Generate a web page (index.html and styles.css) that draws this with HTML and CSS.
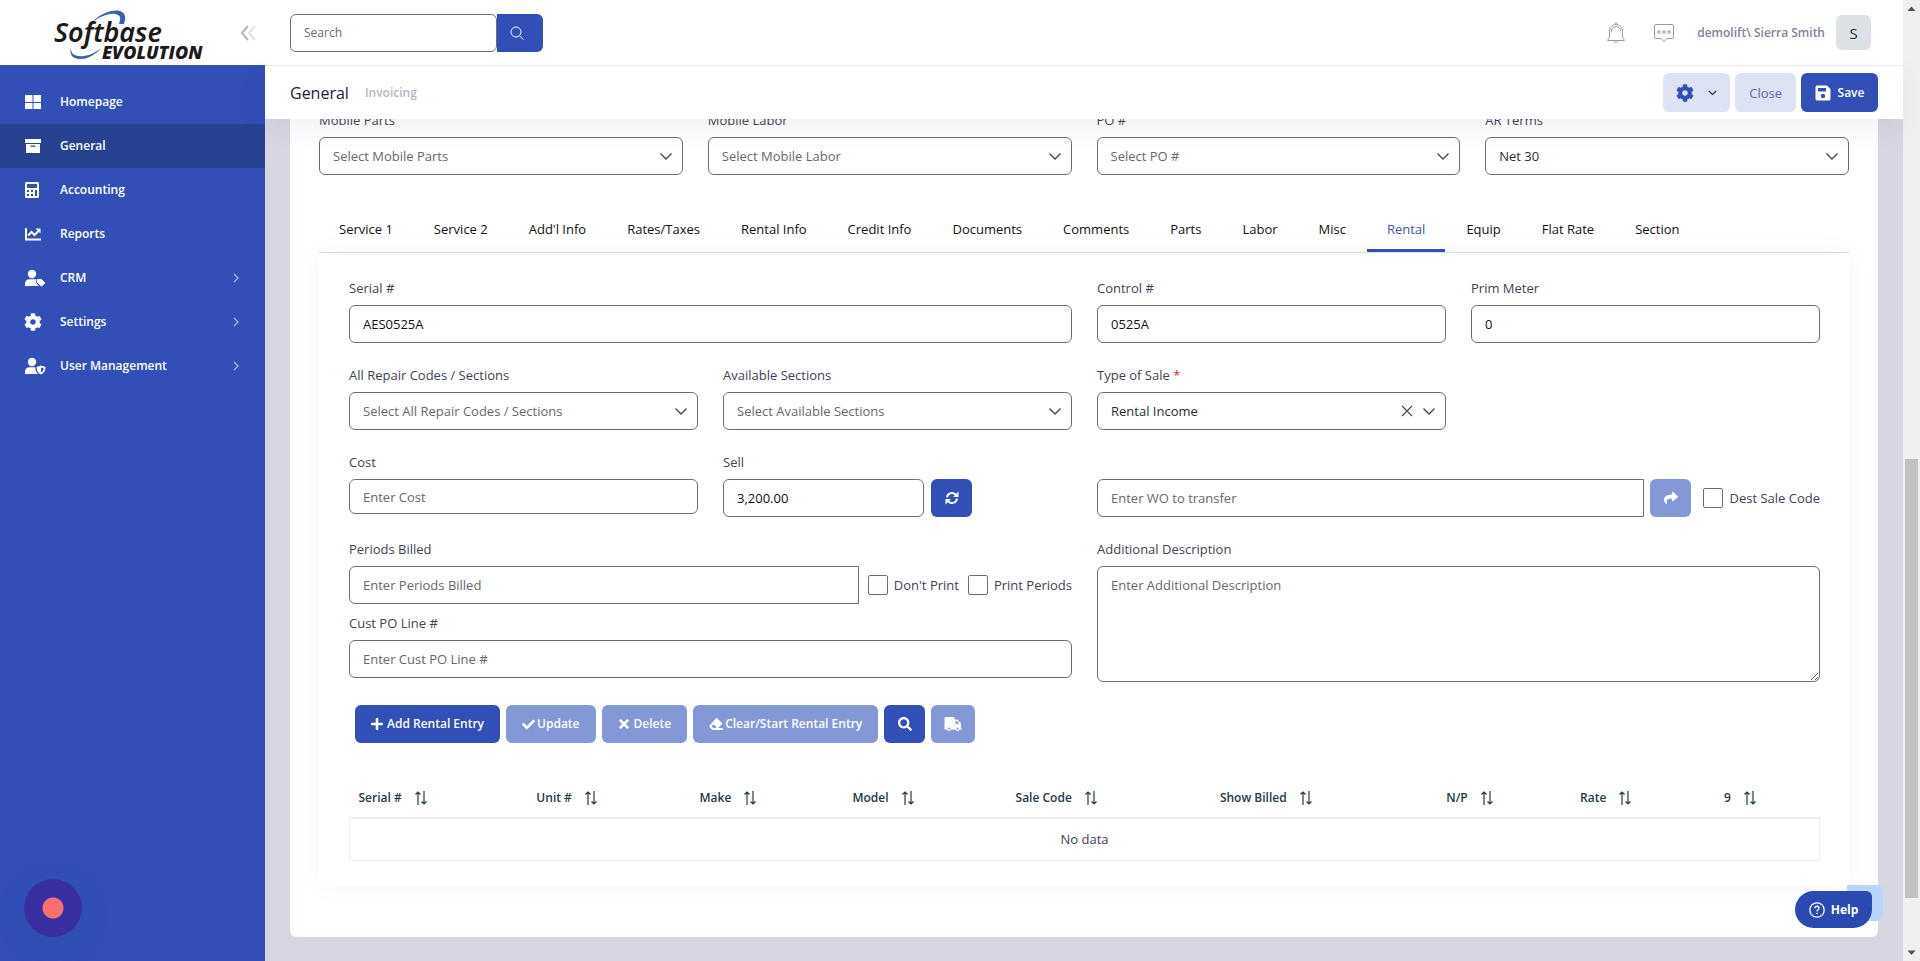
FILE: index.html
```html
<!DOCTYPE html>
<html lang="en">
<head>
<meta charset="utf-8">
<meta name="viewport" content="width=device-width, initial-scale=1">
<title>General - Invoicing</title>
<link rel="stylesheet" href="styles.css">
</head>
<body>
<svg class="sprite" aria-hidden="true">
  <symbol id="i-chev" viewBox="0 0 14 10"><path d="M1.500 2.500 7 8l5.500-5.500" fill="none" stroke="currentColor" stroke-width="1.300"/></symbol>
  <symbol id="i-right" viewBox="0 0 6 10"><path d="M1 1l4 4-4 4" fill="none" stroke="currentColor" stroke-width="1.300"/></symbol>
  <symbol id="i-cog" viewBox="0 0 512 512"><path fill="currentColor" d="M487.400 315.700l-42.600-24.600c4.300-23.200 4.300-47 0-70.200l42.600-24.600c4.900-2.800 7.100-8.600 5.500-14-11.100-35.600-30-67.800-54.700-94.600-3.800-4.100-10-5.100-14.800-2.300L380.800 110c-17.900-15.400-38.500-27.300-60.800-35.100V25.800c0-5.600-3.900-10.500-9.400-11.700-36.700-8.200-74.300-7.800-109.200 0-5.500 1.200-9.400 6.100-9.400 11.700V75c-22.200 7.900-42.800 19.800-60.800 35.100L88.700 85.500c-4.900-2.800-11-1.900-14.800 2.300-24.700 26.700-43.600 58.900-54.700 94.600-1.700 5.400.6 11.200 5.500 14L67.300 221c-4.300 23.200-4.300 47 0 70.200l-42.600 24.600c-4.900 2.800-7.100 8.600-5.500 14 11.100 35.600 30 67.800 54.700 94.600 3.800 4.100 10 5.100 14.800 2.300l42.600-24.600c17.900 15.400 38.500 27.300 60.800 35.100v49.200c0 5.600 3.900 10.500 9.400 11.700 36.700 8.200 74.300 7.800 109.200 0 5.500-1.200 9.400-6.100 9.400-11.700v-49.200c22.200-7.900 42.800-19.800 60.800-35.100l42.600 24.600c4.900 2.800 11 1.900 14.800-2.300 24.700-26.700 43.600-58.900 54.700-94.600 1.500-5.500-.7-11.300-5.600-14.100zM256 336c-44.100 0-80-35.900-80-80s35.900-80 80-80 80 35.900 80 80-35.900 80-80 80z"/></symbol>
  <symbol id="i-sort" viewBox="0 0 14 14"><path d="M4 14V1M1.500 3.500 4 1l2.500 2.500M10 0v13M7.500 10.500 10 13l2.500-2.500" fill="none" stroke="currentColor" stroke-width="1.200"/></symbol>
</svg>

<div class="app">
  <aside class="sidebar">
    <div class="brand">
      <a href="#" aria-label="Softbase Evolution">
        <svg class="logo" viewBox="0 0 150 56">
          <path d="M38 17C46 9 58 4 66 6c6 2 6 7 4 13h-5c2-6 2-9-4-10-7-1-15 3-23 8z" fill="#3f5fb5"/>
          <path d="M17 42c-1 8 6 10 13 9 7-1 12-4 17-8-5 6-12 11-21 11-8 0-11-5-9-12z" fill="#3f5fb5"/>
          <text x="0" y="37" font-family="Noto Sans, sans-serif" font-size="27" font-style="italic" font-weight="600" fill="#1c1a1b">Softbase</text>
          <text x="48" y="54" font-family="Open Sans, sans-serif" font-size="18" font-style="italic" font-weight="800" fill="#1c1a1b">EVOLUTION</text>
        </svg>
      </a>
      <button class="collapse" type="button" aria-label="Collapse menu">
        <svg width="16" height="16" viewBox="0 0 16 16" fill="none" stroke-width="2"><path d="M8 1 2 8l6 7" stroke="#b3b5c6"/><path d="M15 1 9 8l6 7" stroke="#e0e0ea"/></svg>
      </button>
    </div>
    <nav class="menu" aria-label="Main">
      <a href="#"><svg width="18" height="18" viewBox="0 0 18 18"><path fill="currentColor" d="M1 2h7.500v7H1zM9.500 2H17v7H9.500zM1 10h7.500v6H1zM9.500 10H17v6H9.500z"/></svg><span>Homepage</span></a>
      <a href="#" class="active"><svg width="18" height="18" viewBox="0 0 18 18"><path fill="currentColor" fill-rule="evenodd" d="M1 2h16v4H1zM2 7h14v9H2zM6.500 8.500v1.200h5V8.500z"/></svg><span>General</span></a>
      <a href="#"><svg width="18" height="18" viewBox="0 0 18 18"><path fill="currentColor" fill-rule="evenodd" d="M2.500 1h11A1.500 1.500 0 0 1 15 2.500v13a1.500 1.500 0 0 1-1.500 1.500h-11A1.500 1.500 0 0 1 1 15.500v-13A1.500 1.500 0 0 1 2.500 1zM3 3v4h10V3zM3 9v2h2V9zM7 9v2h2V9zM11 9v6h2V9zM3 13v2h2v-2zM7 13v2h2v-2z"/></svg><span>Accounting</span></a>
      <a href="#"><svg width="18" height="18" viewBox="0 0 18 18"><path fill="currentColor" d="M1 3h2v10.500h14v2H1z"/><path d="M4 10.500l3.500-3.500 3 3 4-4" fill="none" stroke="currentColor" stroke-width="2"/><path fill="currentColor" d="M11.500 3.500H16.500V8.500z"/></svg><span>Reports</span></a>
      <a href="#"><svg width="22" height="18" viewBox="0 0 22 18"><circle cx="8" cy="5" r="4.200" fill="currentColor"/><path fill="currentColor" d="M1 17v-2.500C1 12 3 10.300 5.500 10.300h5.500l1.500.2-.3 3.500 2.600 3z"/><path fill="currentColor" d="M13.500 10.500h4l3.500 3.500-3.500 3-4-3.500z" stroke="currentColor" stroke-linejoin="round"/></svg><span>CRM</span><svg class="more" width="6" height="10"><use href="#i-right"/></svg></a>
      <a href="#"><svg width="18" height="18"><use href="#i-cog"/></svg><span>Settings</span><svg class="more" width="6" height="10"><use href="#i-right"/></svg></a>
      <a href="#"><svg width="22" height="18" viewBox="0 0 22 18"><circle cx="8" cy="5" r="4.200" fill="currentColor"/><path fill="currentColor" fill-rule="evenodd" d="M1 17v-2.500C1 12 3 10.300 5.500 10.300h5.700c0 3 .8 5 2.800 6.700zM17 8.500l4.500 1.500c0 3.500-1.200 6-4.500 7.500-3.300-1.500-4.500-4-4.500-7.500zM17 10.500v5c1.800-.8 2.500-2.300 2.600-4.200z"/></svg><span>User Management</span><svg class="more" width="6" height="10"><use href="#i-right"/></svg></a>
    </nav>
    <button class="recorder" type="button" aria-label="Record"></button>
  </aside>

  <div class="main">
    <header class="topbar">
      <form class="search" role="search">
        <input type="text" placeholder="Search" aria-label="Search">
        <button type="button" aria-label="Search"><svg width="14" height="14" viewBox="0 0 14 14" fill="none" stroke="currentColor" stroke-width="1"><circle cx="6" cy="6" r="5"/><path d="M9.500 9.800 13.500 13.500"/></svg></button>
      </form>
      <div class="account">
        <button class="plain" type="button" aria-label="Notifications"><svg width="20" height="22" viewBox="0 0 20 22" fill="none" stroke="#9a9aa3"><path d="M1.500 18.500C4 15.500 3.500 13 3.500 9.500c0-4 2.500-7 6.500-7s6.500 3 6.500 7c0 3.500-.5 6 2 9zM5.500 10V9c0-2.500 1.500-4.500 4.500-4.500S14.500 6.500 14.500 9M8.500 2.500c0-2 3-2 3 0M8 19c.5 2 3.500 2 4 0"/></svg></button>
        <button class="plain" type="button" aria-label="Messages"><svg width="22" height="20" viewBox="0 0 22 20" fill="none" stroke="#9a9aa3"><path d="M3 1.500h16a1.500 1.500 0 0 1 1.500 1.500v11a1.500 1.500 0 0 1-1.500 1.500h-5l-3 3-3-3H3A1.500 1.500 0 0 1 1.500 14V3A1.500 1.500 0 0 1 3 1.500z"/><circle cx="6" cy="9" r="1.300"/><circle cx="11" cy="9" r="1.300"/><circle cx="16" cy="9" r="1.300"/></svg></button>
        <span class="user">demolift\ Sierra Smith</span>
        <button class="avatar" type="button" aria-label="Account menu">S</button>
      </div>
    </header>
    <div class="toolbar">
      <div class="titles"><h1>General</h1><span class="crumb">Invoicing</span></div>
      <div class="actions">
        <button class="btn light gear" type="button" aria-label="Options"><svg width="18" height="18"><use href="#i-cog"/></svg><svg class="dark" width="9" height="8" viewBox="0 0 9 8"><path d="M.8 2l3.700 3.500L8.200 2" fill="none" stroke="currentColor" stroke-width="1.200"/></svg></button>
        <button class="btn light" type="button">Close</button>
        <button class="btn save" type="button"><svg width="16" height="16" viewBox="0 0 16 16"><path fill="currentColor" fill-rule="evenodd" d="M1.500.5H12L15.500 4v10a1.500 1.500 0 0 1-1.500 1.500H2A1.500 1.500 0 0 1 .5 14V2zM3 3v3.500h8V3zM8 8.800a2.200 2.200 0 1 0 0 4.400 2.200 2.200 0 0 0 0-4.400z"/></svg>Save</button>
      </div>
    </div>

    <main class="content">
      <form class="card">
        <div class="grid4 terms">
          <div class="field"><label for="mparts">Mobile Parts</label><div class="pick"><select id="mparts" class="empty"><option>Select Mobile Parts</option></select><svg width="14" height="10"><use href="#i-chev"/></svg></div></div>
          <div class="field"><label for="mlabor">Mobile Labor</label><div class="pick"><select id="mlabor" class="empty"><option>Select Mobile Labor</option></select><svg width="14" height="10"><use href="#i-chev"/></svg></div></div>
          <div class="field"><label for="po">PO #</label><div class="pick"><select id="po" class="empty"><option>Select PO #</option></select><svg width="14" height="10"><use href="#i-chev"/></svg></div></div>
          <div class="field"><label for="ar">AR Terms</label><div class="pick"><select id="ar"><option>Net 30</option></select><svg width="14" height="10"><use href="#i-chev"/></svg></div></div>
        </div>

        <div class="tabs" role="tablist">
          <button type="button" role="tab">Service 1</button>
          <button type="button" role="tab">Service 2</button>
          <button type="button" role="tab">Add'l Info</button>
          <button type="button" role="tab">Rates/Taxes</button>
          <button type="button" role="tab">Rental Info</button>
          <button type="button" role="tab">Credit Info</button>
          <button type="button" role="tab">Documents</button>
          <button type="button" role="tab">Comments</button>
          <button type="button" role="tab">Parts</button>
          <button type="button" role="tab">Labor</button>
          <button type="button" role="tab">Misc</button>
          <button type="button" role="tab" aria-selected="true">Rental</button>
          <button type="button" role="tab">Equip</button>
          <button type="button" role="tab">Flat Rate</button>
          <button type="button" role="tab">Section</button>
        </div>

        <section class="panel" aria-label="Rental">
          <div class="grid4">
            <div class="field span2"><label for="serial">Serial #</label><input type="text" id="serial" value="AES0525A"></div>
            <div class="field"><label for="control">Control #</label><input type="text" id="control" value="0525A"></div>
            <div class="field"><label for="meter">Prim Meter</label><input type="text" id="meter" value="0"></div>

            <div class="field"><label for="codes">All Repair Codes / Sections</label><div class="pick"><select id="codes" class="empty"><option>Select All Repair Codes / Sections</option></select><svg width="14" height="10"><use href="#i-chev"/></svg></div></div>
            <div class="field"><label for="avail">Available Sections</label><div class="pick"><select id="avail" class="empty"><option>Select Available Sections</option></select><svg width="14" height="10"><use href="#i-chev"/></svg></div></div>
            <div class="field"><label for="sale">Type of Sale <span class="req">*</span></label><div class="pick clearable"><select id="sale"><option>Rental Income</option></select><button type="button" class="clear" aria-label="Clear"><svg width="12" height="12" viewBox="0 0 12 12"><path d="M1 1l10 10M11 1 1 11" stroke="currentColor" stroke-width="1.100"/></svg></button><svg width="14" height="10"><use href="#i-chev"/></svg></div></div>
            <div class="void"></div>

            <div class="field"><label for="cost">Cost</label><input type="text" id="cost" class="short" placeholder="Enter Cost"></div>
            <div class="field"><label for="sell">Sell</label><div class="line sell"><input type="text" id="sell" value="3,200.00"><button class="btn icon" type="button" aria-label="Recalculate"><svg width="14" height="14" viewBox="0 0 14 14"><path d="M2 6.300A5 5 0 0 1 11 4M12 7.700A5 5 0 0 1 3 10" fill="none" stroke="currentColor" stroke-width="2"/><path fill="currentColor" d="M13.500.5v5.500H8zM.5 13.500V8H6z"/></svg></button></div></div>
            <div class="line transfer span2"><input type="text" class="flat" placeholder="Enter WO to transfer" aria-label="WO to transfer"><button class="btn icon off" type="button" aria-label="Transfer" disabled><svg width="14" height="14" viewBox="0 0 512 512"><path fill="currentColor" d="M503.700 189.800L327.700 37.900C312.300 24.500 288 35.300 288 56v80C127.400 137.900 0 170.100 0 322.300c0 61.400 39.600 122.300 83.300 154.100 13.700 9.900 33.100-2.500 28.100-18.600C66.100 312.800 132.900 274.300 288 272v88c0 20.700 24.300 31.500 39.700 18.200l176-152c11.100-9.600 11.100-26.800 0-36.400z"/></svg></button><label class="tick wide"><input type="checkbox"><span>Dest Sale Code</span></label></div>

            <div class="stack span2">
              <div class="field"><label for="periods">Periods Billed</label><div class="line checks"><input type="text" id="periods" class="flat" placeholder="Enter Periods Billed"><label class="tick"><input type="checkbox"><span>Don't Print</span></label><label class="tick"><input type="checkbox"><span>Print Periods</span></label></div></div>
              <div class="field"><label for="cust">Cust PO Line #</label><input type="text" id="cust" placeholder="Enter Cust PO Line #"></div>
            </div>
            <div class="field span2"><label for="desc">Additional Description</label><textarea id="desc" placeholder="Enter Additional Description"></textarea></div>
          </div>

          <div class="buttons">
            <button class="btn" type="button"><svg width="12" height="14" viewBox="0 0 448 512"><path fill="currentColor" d="M416 208H272V64c0-17.700-14.300-32-32-32h-32c-17.700 0-32 14.300-32 32v144H32c-17.700 0-32 14.300-32 32v32c0 17.700 14.300 32 32 32h144v144c0 17.700 14.300 32 32 32h32c17.700 0 32-14.300 32-32V304h144c17.700 0 32-14.300 32-32v-32c0-17.700-14.300-32-32-32z"/></svg>Add Rental Entry</button>
            <button class="btn off tight" type="button" disabled><svg width="13" height="13" viewBox="0 0 512 512"><path fill="currentColor" d="M173.900 439.400l-166.400-166.400c-10-10-10-26.200 0-36.200l36.200-36.200c10-10 26.200-10 36.200 0L192 312.700 432.100 72.600c10-10 26.200-10 36.200 0l36.200 36.200c10 10 10 26.200 0 36.200l-294.400 294.400c-10 10-26.200 10-36.200 0z"/></svg>Update</button>
            <button class="btn off" type="button" disabled><svg width="12" height="14" viewBox="0 0 352 512"><path fill="currentColor" d="M242.700 256l100.100-100.100c12.300-12.300 12.300-32.200 0-44.500l-22.200-22.200c-12.300-12.300-32.200-12.300-44.500 0L176 189.300 75.900 89.200c-12.300-12.300-32.200-12.300-44.500 0L9.200 111.500c-12.300 12.300-12.300 32.200 0 44.500L109.300 256 9.200 356.100c-12.300 12.300-12.300 32.200 0 44.500l22.200 22.200c12.300 12.300 32.200 12.300 44.500 0L176 322.700l100.100 100.100c12.300 12.300 32.200 12.300 44.500 0l22.200-22.200c12.300-12.300 12.300-32.200 0-44.500L242.700 256z"/></svg>Delete</button>
            <button class="btn off tight" type="button" disabled><svg width="14" height="14" viewBox="0 0 14 14"><path fill="currentColor" fill-rule="evenodd" d="M6.800 1.500a1 1 0 0 1 1.500 0l4.400 4.300a1 1 0 0 1 0 1.500L9.200 11H14v2H3.600L.6 10a1 1 0 0 1 0-1.400zM4.300 7.500 2.500 9.300 4.300 11h2.200l1.300-1z"/></svg>Clear/Start Rental Entry</button>
            <button class="btn icon" type="button" aria-label="Search rental"><svg width="14" height="14" viewBox="0 0 512 512"><path fill="currentColor" d="M505 442.700L405.300 343c-4.500-4.500-10.600-7-17-7H372c27.600-35.300 44-79.700 44-128C416 93.100 322.900 0 208 0S0 93.100 0 208s93.100 208 208 208c48.300 0 92.700-16.400 128-44v16.300c0 6.400 2.500 12.500 7 17l99.700 99.700c9.400 9.400 24.600 9.400 33.900 0l28.300-28.300c9.400-9.400 9.400-24.600.1-34zM208 336c-70.700 0-128-57.200-128-128 0-70.700 57.200-128 128-128 70.700 0 128 57.200 128 128 0 70.700-57.200 128-128 128z"/></svg></button>
            <button class="btn icon truck off" type="button" aria-label="Deliver" disabled><svg width="18" height="14" viewBox="0 0 18 14"><path fill="currentColor" fill-rule="evenodd" d="M1.500 0h8a1 1 0 0 1 1 1v1.500h2.800L17 6.200V11h.6v1.500H.5V1a1 1 0 0 1 1-1zM11.500 4v2.800h4L12.800 4z"/><circle cx="5" cy="11.500" r="2.400" fill="currentColor"/><circle cx="13.500" cy="11.500" r="2.400" fill="currentColor"/><circle cx="5" cy="11.700" r="1.100" fill="#8497d6"/><circle cx="13.500" cy="11.700" r="1.100" fill="#8497d6"/></svg></button>
          </div>

          <table class="list">
            <colgroup><col class="w12"><col class="w11"><col class="w10"><col class="w11"><col class="w14"><col class="w15"><col class="w9"><col class="w98"><col></colgroup>
            <thead><tr>
              <th scope="col">Serial #<svg width="14" height="14"><use href="#i-sort"/></svg></th>
              <th scope="col">Unit #<svg width="14" height="14"><use href="#i-sort"/></svg></th>
              <th scope="col">Make<svg width="14" height="14"><use href="#i-sort"/></svg></th>
              <th scope="col">Model<svg width="14" height="14"><use href="#i-sort"/></svg></th>
              <th scope="col">Sale Code<svg width="14" height="14"><use href="#i-sort"/></svg></th>
              <th scope="col">Show Billed<svg width="14" height="14"><use href="#i-sort"/></svg></th>
              <th scope="col">N/P<svg width="14" height="14"><use href="#i-sort"/></svg></th>
              <th scope="col">Rate<svg width="14" height="14"><use href="#i-sort"/></svg></th>
              <th scope="col">9<svg width="14" height="14"><use href="#i-sort"/></svg></th>
            </tr></thead>
            <tbody><tr><td colspan="9">No data</td></tr></tbody>
          </table>
        </section>
      </form>
    </main>
  </div>

  <div class="scroll" aria-hidden="true">
    <svg width="17" height="17" viewBox="0 0 17 17"><path d="M4.500 11h8l-4-4.500z" fill="#505050"/></svg>
    <div class="before"></div><div class="thumb"></div><div class="after"></div>
    <svg width="17" height="17" viewBox="0 0 17 17"><path d="M4.500 6.500h8l-4 4.500z" fill="#505050"/></svg>
  </div>
</div>

<div class="help">
  <button type="button"><svg width="16" height="16" viewBox="0 0 16 16" fill="none" stroke="currentColor" stroke-width="1.300"><circle cx="8" cy="8" r="7.200"/><path d="M6 6.300c0-2.800 4-2.600 4-.2C10 7.700 8 7.600 8 9.400M8 10.700v1.300"/></svg>Help</button>
</div>
</body>
</html>
```
FILE: styles.css
```css
* { box-sizing: border-box; }
body {
  margin: 0;
  font: 13px/20px "Open Sans", "Noto Sans", sans-serif;
  color: #3f4254;
  background: #d7d7e3;
}
button, input, select, textarea { font: inherit; color: inherit; margin: 0; }
button { border: 0; padding: 0; background: none; cursor: pointer; }
a { color: inherit; text-decoration: none; }
svg { flex: none; display: block; }
.sprite { position: absolute; width: 0; height: 0; }

.app { display: flex; height: 100vh; overflow: hidden; }

/* Sidebar */
.sidebar { flex: none; width: 265px; display: flex; flex-direction: column; background: #324fb8; color: #fff; }
.brand { height: 65px; display: flex; align-items: flex-start; justify-content: space-between; background: #fff; padding: 5px 9px 0 54px; }
.logo { width: 150px; height: 56px; overflow: visible; }
.collapse { padding-top: 20px; }
.menu { padding-top: 15px; flex: 1; font-size: 12px; font-weight: 600; }
.menu a { display: flex; align-items: center; height: 44px; padding: 0 26px 0 24px; }
.menu a.active { background: #284292; }
.menu a > svg:first-child { margin-right: 18px; }
.menu a > svg[width="22"]:first-child { margin-right: 14px; }
.menu .more { margin-left: auto; color: #a9b6e6; }
.recorder { width: 58px; height: 58px; margin: 0 0 24px 24px; border-radius: 50%; background: radial-gradient(circle, #fd6f6f 0 10px, #382ea0 11px); box-shadow: 0 8px 24px rgba(40, 80, 170, .4); }

/* Top bars */
.main { flex: 1; min-width: 0; display: flex; flex-direction: column; }
.topbar { flex: none; height: 66px; display: flex; align-items: center; justify-content: space-between; padding: 0 32px 0 25px; background: #fff; border-bottom: 1px solid #e8e8ee; z-index: 2; }
.search { display: flex; width: 253px; height: 38px; }
.search input { flex: 1; min-width: 0; height: 38px; border-radius: 6px 0 0 6px; border-right: 0; font-size: 12px; }
.search button { width: 46px; display: grid; place-items: center; padding-right: 6px; color: #fff; background: #324fb8; border-radius: 0 6px 6px 0; }
.account { display: flex; align-items: center; }
.plain { margin-right: 27px; }
.plain + .plain { margin-right: 22px; }
.user { margin-right: 11px; font-size: 12px; font-weight: 600; color: #858198; }
.avatar { width: 35px; height: 35px; border-radius: 6px; background: #dce1e5; color: #22263a; font-size: 15px; }
.toolbar { flex: none; height: 53px; display: flex; align-items: center; justify-content: space-between; padding: 0 25px; background: #fff; box-shadow: 0 10px 30px rgba(82, 63, 105, .08); z-index: 1; }
.titles { display: flex; align-items: center; gap: 16px; }
h1 { margin: 0; font-size: 16px; font-weight: 400; color: #181c32; }
.crumb { color: #b5b5c3; font-size: 12px; font-weight: 600; }
.actions { display: flex; gap: 5px; }

.btn { display: inline-flex; align-items: center; justify-content: center; gap: 4px; height: 38px; padding: 0 16px; border-radius: 6px; background: #324fb8; color: #fff; font-size: 12px; font-weight: 600; }
.btn.light { height: 39px; padding: 0 14px; background: #dde2f4; color: #5b6cae; font-size: 13px; font-weight: 400; }
.btn.gear { width: 67px; gap: 14px; color: #324fb8; }
.dark { color: #333; }
.btn.save { height: 39px; width: 77px; gap: 7px; padding: 0; }
.btn.off { background: #8497d6; cursor: default; }
.btn.tight { gap: 2px; }
.btn.icon { flex: none; width: 41px; padding: 0; }
.btn.truck { width: 44px; }

/* Page card */
.content { flex: 1; min-height: 0; overflow: hidden; padding: 0 25px 24px; }
.card { margin-top: -40px; padding: 31px 29px 51px; background: #fff; border-radius: 6px; }
.grid4 { display: grid; grid-template-columns: repeat(4, minmax(0, 1fr)); gap: 22px 25px; }
.span2 { grid-column: span 2; }
.field { display: flex; flex-direction: column; gap: 7px; }
.field > label { height: 20px; }
.req { color: #e02020; }
input[type="text"], select, textarea { width: 100%; height: 38px; padding: 0 13px; border: 1px solid #6e6e74; border-radius: 6px; background: #fff; color: #111; outline: 0; }
input.short { height: 35px; }
input.flat { border-radius: 6px 0 0 6px; }
::placeholder { color: #66686e; opacity: 1; }
textarea { height: 116px; padding: 8px 13px; display: block; resize: vertical; }
select { appearance: none; grid-area: 1 / 1 / 2 / -1; color: #2b2d33; }
select.empty { color: #66686e; }
.pick { display: grid; grid-template-columns: 1fr auto auto; align-items: center; }
.pick > svg { grid-area: 1 / 3; margin-right: 10px; color: #444; pointer-events: none; }
.clear { grid-area: 1 / 2; margin-right: 9px; color: #444; }
.line { display: flex; align-items: center; }
.line input[type="text"] { flex: 1; min-width: 0; }
.sell { gap: 7px; width: 249px; }
.transfer { align-self: end; gap: 6px; }
.tick { display: flex; align-items: center; gap: 6px; }
.tick.wide { margin-left: 6px; }
.tick input { appearance: none; width: 20px; height: 20px; border: 1px solid #6e6e74; border-radius: 2px; background: #fff; }
.tick span { white-space: nowrap; }
.checks { gap: 9px; }
.stack { display: flex; flex-direction: column; gap: 9px; }

/* Tabs */
.tabs { display: flex; gap: 1px; margin-top: 32px; border-bottom: 1px solid #dfe0e6; }
.tabs button { height: 45px; padding: 2px 20px 0; border-bottom: 3px solid transparent; color: #111; white-space: nowrap; }
.tabs [aria-selected="true"] { color: #3f56a8; border-color: #324fb8; }
.panel { padding: 25px 29px 25px 30px; box-shadow: 0 0 30px rgba(82, 63, 105, .04); border-radius: 0 0 6px 6px; }

.buttons { display: flex; gap: 6px; margin: 23px 0 34px; padding-left: 6px; }

.list { width: 100%; table-layout: fixed; border-collapse: collapse; }
.list th { height: 41px; padding: 2px 9px 0; text-align: left; font-size: 12px; font-weight: 600; color: #223a4a; white-space: nowrap; }
.list th svg { display: inline-block; margin-left: 12px; vertical-align: -3px; }
.list td { height: 42px; padding: 0; text-align: center; border: 1px solid #efeff2; border-top: 2px solid #efeff2; }
.w12 { width: 12.1%; } .w11 { width: 11.1%; } .w10 { width: 10.4%; } .w14 { width: 13.9%; } .w15 { width: 15.4%; } .w9 { width: 9.1%; } .w98 { width: 9.8%; }

/* Page scroll strip */
.scroll { flex: none; width: 17px; display: flex; flex-direction: column; background: #f0f0f0; }
.before { flex: 442; }
.thumb { flex: 439; margin: 0 2px; background: #c1c1c1; }
.after { flex: 46; }

/* Floating help button */
.help { position: fixed; right: 37px; bottom: 40px; z-index: 5; padding: 6px 11px 0 0; height: 36px; border-radius: 6px; background: linear-gradient(#b9d6fa, #b9d6fa) right / 36px 100% no-repeat; }
.help button { display: flex; align-items: center; justify-content: center; gap: 6px; width: 77px; height: 37px; border-radius: 20px 6px 20px 20px; background: #2b49b3; color: #fff; font-size: 12px; font-weight: 700; }
```
